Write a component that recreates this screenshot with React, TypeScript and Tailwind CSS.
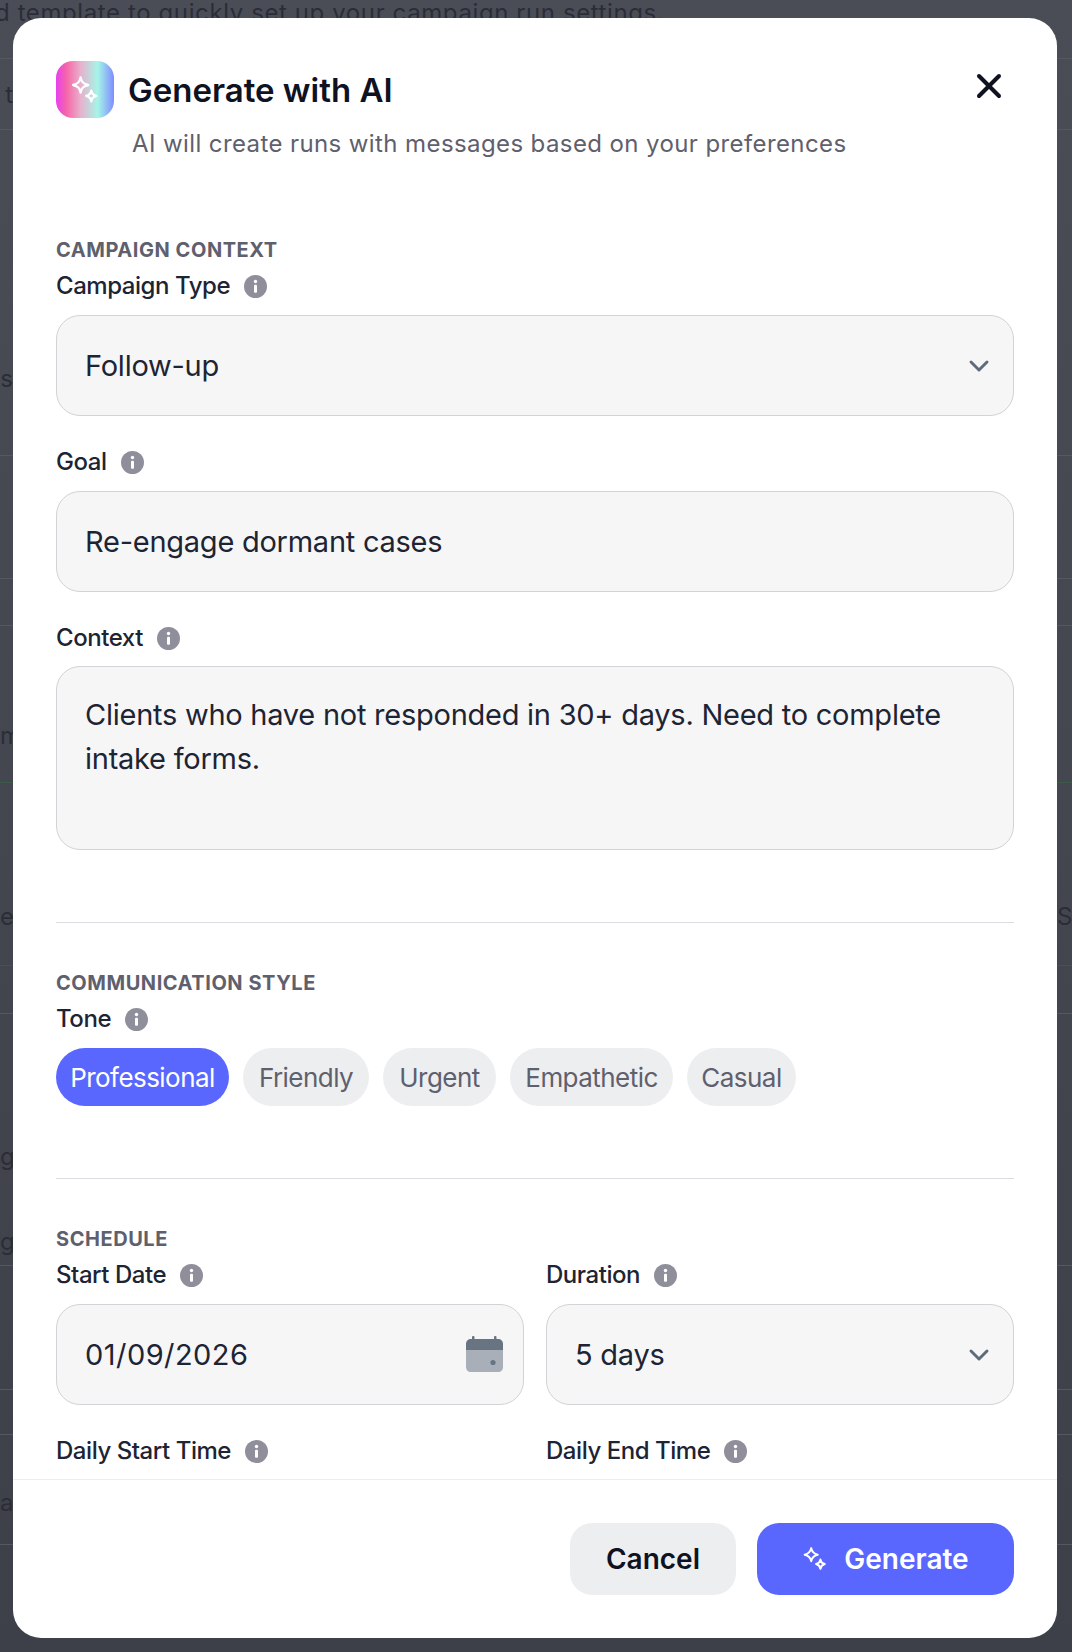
import { ChevronDown, X } from 'lucide-react';

const font = "font-['Inter','Liberation_Sans',sans-serif]";

// rows of the page behind the overlay, only their edges show
const bgRows = [
  { h: 'h-[59px]', pt: 'pt-0', left: '', right: '' },
  { h: 'h-[71px]', pt: 'pt-[18px]', left: 't', right: '' },
  { h: 'h-[326px]', pt: 'pt-[231px]', left: 's', right: '' },
  { h: 'h-[123px]', pt: 'pt-0', left: '', right: '' },
  { h: 'h-[47px]', pt: 'pt-0', left: '', right: '' },
  { h: 'h-[157px]', pt: 'pt-[92px]', left: 'm', right: '', green: true },
  { h: 'h-[183px]', pt: 'pt-[116px]', left: 'es', right: 'S', green: true },
  { h: 'h-[48px]', pt: 'pt-0', left: '', right: '' },
  { h: 'h-[186px]', pt: 'pt-[125px]', left: 'ge', right: '', clear: true },
  { h: 'h-[66px]', pt: 'pt-[24px]', left: 'ge', right: '' },
  { h: 'h-[124px]', pt: 'pt-0', left: '', right: '' },
  { h: 'h-[45px]', pt: 'pt-0', left: '', right: '' },
  { h: 'h-[110px]', pt: 'pt-[50px]', left: 'a', right: '' },
];

function Info() {
  return (
    <svg width="23" height="23" viewBox="0 0 23 23" className="shrink-0">
      <circle cx="11.5" cy="11.5" r="11.5" fill="#8e8f9b" />
      <circle cx="11.5" cy="6.5" r="1.7" fill="#fff" />
      <rect x="10" y="9.8" width="3" height="8" rx="1" fill="#fff" />
    </svg>
  );
}

function Sparkles({ size, color }: { size: number; color: string }) {
  return (
    <svg width={size} height={size} viewBox="0 0 24 24" fill="none" stroke={color} strokeWidth="1.9" strokeLinejoin="round">
      <path d="M8.5 2C9.2 5.6 10.6 7.1 14.5 8C10.6 8.9 9.2 10.4 8.5 14C7.8 10.4 6.4 8.9 2.5 8C6.4 7.1 7.8 5.6 8.5 2Z" />
      <path d="M17 12.5C17.4 15 18.4 16 21 16.7C18.4 17.4 17.4 18.4 17 21C16.6 18.4 15.6 17.4 13 16.7C15.6 16 16.6 15 17 12.5Z" />
    </svg>
  );
}

function Calendar() {
  return (
    <svg width="37" height="37" viewBox="0 0 37 37">
      <rect x="6" y="0" width="2.5" height="6" rx="1" fill="#687482" />
      <rect x="28" y="0" width="2.5" height="6" rx="1" fill="#687482" />
      <path d="M0 14V8C0 5 2 3 5 3H32C35 3 37 5 37 8V14Z" fill="#687482" />
      <path d="M0 14H37V31C37 34 35 36 32 36H5C2 36 0 34 0 31Z" fill="#a9afb8" />
      <circle cx="27" cy="26.5" r="2.6" fill="#687482" />
    </svg>
  );
}

function Chevron() {
  return <ChevronDown size={32} strokeWidth={2.2} className="mr-[-2px] text-[#5d6b7a]" />;
}

function SectionLabel({ children }: { children: string }) {
  return <div className="text-[20px] leading-[28px] font-bold tracking-[0.55px] text-[#5f606d] uppercase">{children}</div>;
}

function FieldLabel({ children }: { children: string }) {
  return (
    <div className="flex items-center gap-[14px] text-[24px] leading-[36px] font-medium text-[#1d2433] tracking-[-0.45px]">
      {children}
      <Info />
    </div>
  );
}

function Field({ value, icon, wide }: { value: string; icon?: React.ReactNode; wide?: boolean }) {
  return (
    <div className="flex h-[101px] items-center justify-between rounded-[24px] border border-[#d2d3d6] bg-[#f6f6f7] pl-[28px] pr-[20px] text-[29px] text-[#1d2433]">
      <span className={wide ? 'tracking-[0.45px]' : 'tracking-[-0.25px]'}>{value}</span>
      {icon}
    </div>
  );
}

const tones = [
  { label: 'Professional', w: 'w-[173px]' },
  { label: 'Friendly', w: 'w-[126px]' },
  { label: 'Urgent', w: 'w-[113px]' },
  { label: 'Empathetic', w: 'w-[163px]' },
  { label: 'Casual', w: 'w-[109px]' },
];

export default function App() {
  return (
    <div className={`relative h-[1652px] w-[1072px] overflow-hidden bg-[#44464f] ${font}`}>
      {/* Page behind the overlay */}
      <div className="flex h-full flex-col bg-gradient-to-b from-[#4a4d56] to-[#3e4049]">
        <div className="h-0 overflow-visible">
          <div className="ml-[-5px] mt-[-5px] whitespace-nowrap text-[24px] leading-[36px] tracking-[0.6px] text-[#2a2d38]">
            d template to quickly set up your campaign run settings.
          </div>
        </div>
        {bgRows.map((row, i) => (
          <div
            key={i}
            className={`flex shrink-0 items-start justify-between text-[24px] leading-[36px] text-[#2a2d38] ${row.h} ${row.pt} ${row.clear ? '' : 'border-b'} ${row.green ? 'border-[#3d5a49]' : 'border-[#555861]'}`}
          >
            <div className="w-[13px] overflow-hidden whitespace-nowrap text-right">{row.left}</div>
            <div className="w-[15px] overflow-hidden whitespace-nowrap">{row.right}</div>
          </div>
        ))}
      </div>

      {/* Modal */}
      <div className="absolute left-[13px] top-[18px] flex h-[1620px] w-[1044px] flex-col overflow-hidden rounded-[28px] bg-white">
        <div className="flex-1 overflow-hidden px-[43px]">
          <div className="relative pt-[43px]">
            <div className="flex items-center gap-[14px]">
              <div className="flex h-[57px] w-[58px] items-center justify-center rounded-[17px] bg-[linear-gradient(90deg,#e83ff0_0%,#f566a8_18%,#e8b0cc_42%,#a5f5e8_72%,#7f8cff_100%)]">
                <Sparkles size={30} color="#ffffff" />
              </div>
              <h1 className="text-[33px] font-semibold leading-[40px] text-[#0f1221]">Generate with AI</h1>
            </div>
            <button className="absolute right-[5px] top-[48px] text-[#0f1221]">
              <X size={40} strokeWidth={2.4} />
            </button>
            <p className="ml-[76px] mt-[8px] text-[24px] leading-[36px] tracking-[0.4px] text-[#5f606d]">
              AI will create runs with messages based on your preferences
            </p>
          </div>

          {/* Campaign context */}
          <div className="mt-[74px]">
            <SectionLabel>Campaign Context</SectionLabel>
            <div className="mt-[4px]">
              <FieldLabel>Campaign Type</FieldLabel>
            </div>
            <div className="mt-[11px]">
              <Field value="Follow-up" icon={<Chevron />} />
            </div>
            <div className="mt-[28px]">
              <FieldLabel>Goal</FieldLabel>
            </div>
            <div className="mt-[11px]">
              <Field value="Re-engage dormant cases" />
            </div>
            <div className="mt-[28px]">
              <FieldLabel>Context</FieldLabel>
            </div>
            <div className="mt-[10px] h-[184px] rounded-[24px] border border-[#d2d3d6] bg-[#f6f6f7] px-[28px] py-[26px] text-[29px] leading-[44px] tracking-[-0.25px] text-[#1d2433]">
              Clients who have not responded in 30+ days. Need to complete intake forms.
            </div>
          </div>

          <div className="mt-[72px] border-t border-[#dcdde0]" />

          {/* Communication style */}
          <div className="mt-[46px]">
            <SectionLabel>Communication Style</SectionLabel>
            <div className="mt-[4px]">
              <FieldLabel>Tone</FieldLabel>
            </div>
            <div className="mt-[11px] flex gap-[14px]">
              {tones.map((tone, i) => (
                <div
                  key={tone.label}
                  className={`flex h-[58px] items-center justify-center rounded-full text-[26px] tracking-[-0.55px] ${tone.w} ${i === 0 ? 'bg-[#5a67ff] text-white' : 'bg-[#edeef0] text-[#5f606d]'}`}
                >
                  {tone.label}
                </div>
              ))}
            </div>
          </div>

          <div className="mt-[72px] border-t border-[#dcdde0]" />

          {/* Schedule */}
          <div className="mt-[46px]">
            <SectionLabel>Schedule</SectionLabel>
            <div className="mt-[4px] grid grid-cols-2 gap-x-[22px]">
              <div>
                <FieldLabel>Start Date</FieldLabel>
                <div className="mt-[11px]">
                  <Field value="01/09/2026" icon={<Calendar />} wide />
                </div>
              </div>
              <div>
                <FieldLabel>Duration</FieldLabel>
                <div className="mt-[11px]">
                  <Field value="5 days" icon={<Chevron />} />
                </div>
              </div>
              <div className="mt-[28px]">
                <FieldLabel>Daily Start Time</FieldLabel>
              </div>
              <div className="mt-[28px]">
                <FieldLabel>Daily End Time</FieldLabel>
              </div>
            </div>
          </div>
        </div>

        {/* Footer */}
        <div className="flex h-[159px] shrink-0 justify-end gap-[21px] border-t border-[#ecedef] px-[43px] pt-[43px]">
          <button className="h-[72px] w-[166px] rounded-[22px] bg-[#edeef0] text-[28px] font-semibold text-[#0f1221]">Cancel</button>
          <button className="flex h-[72px] w-[257px] items-center justify-center gap-[16px] rounded-[22px] bg-[#5a67ff] text-[28px] font-semibold text-white">
            <Sparkles size={26} color="#ffffff" />
            Generate
          </button>
        </div>
      </div>
    </div>
  );
}
